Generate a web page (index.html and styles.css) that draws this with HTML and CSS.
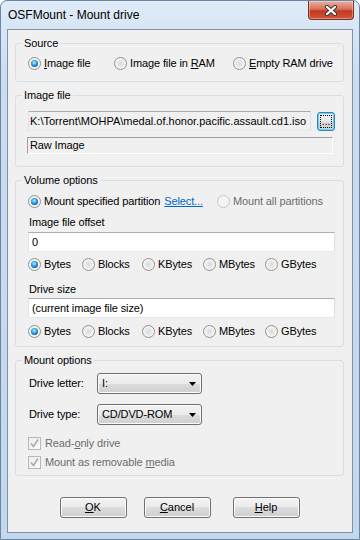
FILE: index.html
```html
<!DOCTYPE html>
<html lang="en">

<head>
    <meta charset="UTF-8">
    <meta name="viewport" content="width=device-width, initial-scale=1.0">
    <title>OSFMount - Mount drive</title>
    <link rel="stylesheet" href="styles.css">
</head>

<body>
    <div class="window">
        <div class="titlebar">
            <span class="title">OSFMount - Mount drive</span>
            <span class="close">
                <svg width="14" height="11" viewBox="0 0 14 11">
                    <path d="M3 2 L11 9 M11 2 L3 9" stroke="#3b3b3b" stroke-width="4.2" stroke-linecap="round" fill="none" />
                    <path d="M3 2 L11 9 M11 2 L3 9" stroke="#ffffff" stroke-width="2.2" stroke-linecap="round" fill="none" />
                </svg>
            </span>
        </div>

        <div class="client">
            <fieldset class="group source">
                <legend>Source</legend>
                <div class="body">
                    <div class="row">
                        <label class="opt w86"><span class="radio on"></span><span><u>I</u>mage file</span></label>
                        <label class="opt w119"><span class="radio"></span><span>Image file in <u>R</u>AM</span></label>
                        <label class="opt"><span class="radio"></span><span><u>E</u>mpty RAM drive</span></label>
                    </div>
                </div>
            </fieldset>

            <fieldset class="group image">
                <legend>Image file</legend>
                <div class="body">
                    <div class="row">
                        <div class="edit readonly path">K:\Torrent\MOHPA\medal.of.honor.pacific.assault.cd1.iso</div>
                        <button class="browse"><span class="focus">...</span></button>
                    </div>
                    <div class="static">Raw Image</div>
                </div>
            </fieldset>

            <fieldset class="group volume">
                <legend>Volume options</legend>
                <div class="body">
                    <div class="row">
                        <label class="opt"><span class="radio on"></span><span>Mount specified partition</span></label>
                        <a class="link">Select...</a>
                        <label class="opt disabled"><span class="radio dis"></span><span>Mount all partitions</span></label>
                    </div>
                    <div class="caption first">Image file offset</div>
                    <div class="edit">0</div>
                    <div class="row units">
                        <label class="opt w54"><span class="radio on"></span><span>Bytes</span></label>
                        <label class="opt w60"><span class="radio"></span><span>Blocks</span></label>
                        <label class="opt w61"><span class="radio"></span><span>KBytes</span></label>
                        <label class="opt w62"><span class="radio"></span><span>MBytes</span></label>
                        <label class="opt"><span class="radio"></span><span>GBytes</span></label>
                    </div>
                    <div class="caption second">Drive size</div>
                    <div class="edit">(current image file size)</div>
                    <div class="row units">
                        <label class="opt w54"><span class="radio on"></span><span>Bytes</span></label>
                        <label class="opt w60"><span class="radio"></span><span>Blocks</span></label>
                        <label class="opt w61"><span class="radio"></span><span>KBytes</span></label>
                        <label class="opt w62"><span class="radio"></span><span>MBytes</span></label>
                        <label class="opt"><span class="radio"></span><span>GBytes</span></label>
                    </div>
                </div>
            </fieldset>

            <fieldset class="group mount">
                <legend>Mount options</legend>
                <div class="body">
                    <div class="row field">
                        <span class="field-label">Drive letter:</span>
                        <div class="combo">
                            <span>I:</span>
                            <svg width="7" height="4" viewBox="0 0 7 4"><path d="M0 0 H7 L3.5 4 Z" fill="#000" /></svg>
                        </div>
                    </div>
                    <div class="row field second">
                        <span class="field-label">Drive type:</span>
                        <div class="combo">
                            <span>CD/DVD-ROM</span>
                            <svg width="7" height="4" viewBox="0 0 7 4"><path d="M0 0 H7 L3.5 4 Z" fill="#000" /></svg>
                        </div>
                    </div>
                    <label class="opt disabled checkrow">
                        <span class="check"><svg width="11" height="11" viewBox="0 0 11 11"><path d="M2 5.5 L4.5 8.5 L9 1.5" stroke="#a8a8a8" stroke-width="1.5" fill="none" /></svg></span>
                        <span>Read-<u>o</u>nly drive</span>
                    </label>
                    <label class="opt disabled checkrow next">
                        <span class="check"><svg width="11" height="11" viewBox="0 0 11 11"><path d="M2 5.5 L4.5 8.5 L9 1.5" stroke="#a8a8a8" stroke-width="1.5" fill="none" /></svg></span>
                        <span>Mount as removable <u>m</u>edia</span>
                    </label>
                </div>
            </fieldset>

            <div class="buttons">
                <button class="btn"><u>O</u>K</button>
                <button class="btn"><u>C</u>ancel</button>
                <button class="btn help"><u>H</u>elp</button>
            </div>
        </div>
    </div>
</body>

</html>
```

FILE: styles.css
```css
html,
body {
    margin: 0;
}

body {
    width: 360px;
    height: 540px;
    font-family: "Liberation Sans", Arial, sans-serif;
    font-size: 11px;
    line-height: 13px;
    letter-spacing: -0.12px;
    color: #000;
    background: #fff;
}

.window {
    box-sizing: border-box;
    width: 360px;
    height: 540px;
    display: flex;
    flex-direction: column;
    border: 1px solid #6a86a6;
    border-radius: 7px 7px 0 0;
    background: linear-gradient(#dfebf7, #cadcf0 80px, #c3d7ed);
}

.titlebar {
    height: 28px;
    display: flex;
    justify-content: space-between;
    align-items: flex-start;
}

.title {
    margin: 7px 0 0 7px;
    font-size: 12px;
    line-height: 15px;
    letter-spacing: 0;
}

.close {
    box-sizing: border-box;
    width: 46px;
    height: 19px;
    margin-right: 5px;
    display: flex;
    align-items: center;
    justify-content: center;
    border: 1px solid #7d2f21;
    border-top: none;
    border-radius: 0 0 4px 4px;
    background: linear-gradient(#eab1a4, #d8705a 45%, #c4391f 55%, #d0553b);
    box-shadow: inset 0 0 0 1px rgba(255, 255, 255, 0.35);
}

.client {
    flex: 1;
    margin: 0 6px 6px;
    padding: 7px 8px 0 7px;
    display: flex;
    flex-direction: column;
    border: 1px solid #7f92a9;
    background: #f0f0f0;
}

.group {
    margin: 7px 0 0;
    padding: 0;
    min-inline-size: 0;
    border: 1px solid #d5dfe5;
    border-radius: 3px;
}

.group.source {
    margin-top: 0;
}

.group legend {
    margin-left: 6px;
    padding: 0 2px;
    line-height: 13px;
}

.group .body {
    padding: 8px 8px 8px 12px;
}

.source .body {
    padding-top: 7px;
    padding-bottom: 11px;
}

.image .body {
    padding-top: 9px;
    padding-bottom: 12px;
}

.mount .body {
    padding-top: 6px;
    padding-bottom: 6px;
}

.row {
    display: flex;
    align-items: center;
}

.opt {
    display: inline-flex;
    align-items: center;
    gap: 3px;
    white-space: nowrap;
}

.w86 { width: 86px; }
.w119 { width: 119px; }
.w54 { width: 54px; }
.w60 { width: 60px; }
.w61 { width: 61px; }
.w62 { width: 62px; }

.radio {
    box-sizing: border-box;
    flex: none;
    width: 13px;
    height: 13px;
    display: inline-flex;
    align-items: center;
    justify-content: center;
    border: 1px solid #8e8f8f;
    border-radius: 50%;
    background: radial-gradient(circle at 50% 50%, #d9d9d9 0, #ececec 45%, #fafafa 75%, #e2e2e2 100%);
}

.radio.on::after {
    content: "";
    width: 7px;
    height: 7px;
    border-radius: 50%;
    background: radial-gradient(circle at 45% 38%, #c4f0ff 0, #45aee9 35%, #0e66b4 70%, #0a3e78 100%);
}

.radio.dis {
    border-color: #c4c4c4;
    background: #f4f4f4;
}

.disabled {
    color: #6d6d6d;
}

.link {
    margin-left: 4px;
    color: #0066cc;
    text-decoration: underline;
}

.volume .row .disabled {
    margin-left: 14px;
}

.caption {
    padding-left: 1px;
}

.caption.first {
    margin-top: 8px;
}

.caption.second {
    margin-top: 12px;
}

.edit {
    box-sizing: border-box;
    height: 20px;
    margin-top: 3px;
    padding: 0 3px;
    display: flex;
    align-items: center;
    white-space: nowrap;
    overflow: hidden;
    border: 1px solid;
    border-color: #abadb3 #dbdfe6 #e3e9ef #e2e3ea;
    background: #fff;
}

.caption.second + .edit {
    margin-top: 2px;
}

.edit.readonly {
    background: #f0f0f0;
}

.edit.path {
    width: 285px;
    margin-top: 0;
    padding-left: 1px;
    letter-spacing: 0;
}

.units {
    margin-top: 6px;
}

.caption.second + .edit + .units {
    margin-top: 7px;
}

.browse {
    box-sizing: border-box;
    width: 18px;
    height: 19px;
    margin-left: 6px;
    padding: 2px;
    display: flex;
    border: 1px solid #3c7fb1;
    border-radius: 3px;
    background: linear-gradient(#f4f4f4, #e6e6e6 50%, #d8d8d8 50%, #d0d0d0);
    box-shadow: inset 0 0 0 1px #62d2fa;
    font: inherit;
}

.browse .focus {
    flex: 1;
    display: flex;
    align-items: flex-end;
    justify-content: center;
    border: 1px dotted #000;
    font-size: 10px;
    line-height: 10px;
}

.static {
    box-sizing: border-box;
    width: 306px;
    height: 17px;
    margin: 6px 0 0 -1px;
    padding: 0 2px;
    line-height: 15px;
    border: 1px solid;
    border-color: #a0a0a0 #fff #fff #a0a0a0;
}

.field-label {
    width: 69px;
    padding-left: 1px;
    box-sizing: border-box;
}

.field.second {
    margin-top: 10px;
}

.combo {
    box-sizing: border-box;
    width: 105px;
    height: 21px;
    padding: 0 5px 0 4px;
    display: flex;
    align-items: center;
    justify-content: space-between;
    border: 1px solid #707070;
    border-radius: 3px;
    background: linear-gradient(#f2f2f2, #ebebeb 50%, #dddddd 50%, #cfcfcf);
    box-shadow: inset 0 0 0 1px #fbfbfb;
}

.checkrow {
    display: flex;
    margin-top: 12px;
    gap: 4px;
}

.checkrow.next {
    margin-top: 6px;
}

.check {
    box-sizing: border-box;
    width: 13px;
    height: 13px;
    display: flex;
    align-items: center;
    justify-content: center;
    border: 1px solid #b8b8b8;
    background: linear-gradient(135deg, #ececec, #fbfbfb);
}

.buttons {
    margin-top: 21px;
    display: flex;
    justify-content: center;
    gap: 17px;
}

.btn {
    box-sizing: border-box;
    width: 67px;
    height: 21px;
    padding: 0;
    border: 1px solid #707070;
    border-radius: 3px;
    background: linear-gradient(#f2f2f2, #ebebeb 50%, #dddddd 50%, #cfcfcf);
    box-shadow: inset 0 0 0 1px #fbfbfb;
    font: inherit;
    color: #000;
}

.btn.help {
    margin-left: 5px;
}
```
